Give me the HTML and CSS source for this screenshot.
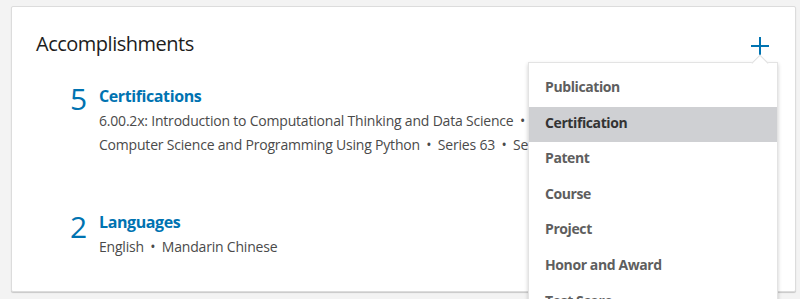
FILE: index.html
```html
<!DOCTYPE html>
<html lang="en">
<head>
<meta charset="utf-8">
<title>Accomplishments</title>
<link rel="stylesheet" href="styles.css">
</head>
<body>
	<div class="card">
		<div class="card_head">
			<h2 class="card_title">Accomplishments</h2>
			<button class="add_btn" type="button" aria-label="Add accomplishment">
				<svg width="18" height="18" viewBox="0 0 18 18"><path d="M9 0v18M0 9h18" stroke="#0073b1" stroke-width="2" fill="none"/></svg>
			</button>
		</div>

		<ul class="accomplishments">
			<li class="acc_item">
				<div class="acc_count">5</div>
				<div class="acc_body">
					<h3 class="acc_title">Certifications</h3>
					<div class="acc_line">6.00.2x: Introduction to Computational Thinking and Data Science <span class="dot">&bull;</span> 6.00.1x: Introduction to</div>
					<div class="acc_line">Computer Science and Programming Using Python <span class="dot">&bull;</span> Series 63 <span class="dot">&bull;</span> Series 65 <span class="dot">&bull;</span> Series 7</div>
				</div>
			</li>
			<li class="acc_item acc_item2">
				<div class="acc_count">2</div>
				<div class="acc_body">
					<h3 class="acc_title">Languages</h3>
					<div class="acc_line">English <span class="dot">&bull;</span> Mandarin Chinese</div>
				</div>
			</li>
		</ul>

		<!-- add menu, open -->
		<ul class="add_menu">
			<li>Publication</li>
			<li class="active">Certification</li>
			<li>Patent</li>
			<li>Course</li>
			<li>Project</li>
			<li>Honor and Award</li>
			<li>Test Score</li>
			<li>Language</li>
		</ul>
	</div>
</body>
</html>
```

FILE: styles.css
```css
html {
 background:#f3f3f3;
}
body {
 margin:0;
 padding:6px 0 0 11px;
 height:293px;
 overflow:hidden;
 font:normal 14px "Open Sans",Arial,sans-serif;
 color:#4a4a4a;
}

/* CARD */
.card {
	position: relative;
	width: 783px;
	height: 284px;
	background: #fff;
	border: 1px solid #dcdcdc;
	border-radius: 2px;
	box-shadow: 0 1px 1px rgba(0,0,0,0.18);
}
.card_head {
	display: flex;
	justify-content: space-between;
	align-items: center;
	padding: 23px 26px 0 24px;
}
.card_title {
	margin: 0;
	font-size: 20px;
	font-weight: normal;
	line-height: 28px;
	letter-spacing: -0.5px;
	color: #1d1d1d;
}
.add_btn {
	border: 0;
	background: none;
	padding: 0;
	margin-top: 4px;
	display: flex;
}

/* LIST */
.accomplishments {
	list-style: none;
	margin: 0;
	padding: 26px 0 0 58px;
}
.acc_item {
	display: flex;
	align-items: flex-start;
}
.acc_item2 {
	margin-top: 53px;
}
.acc_count {
	width: 29px;
	font-size: 30px;
	line-height: 30px;
	color: #0073b1;
}
.acc_item2 .acc_count {
	margin-top: 2px;
}
.acc_title {
	margin: 0 0 1px 0;
	font-size: 16px;
	font-weight: bold;
	line-height: 24px;
	letter-spacing: -0.4px;
	color: #0073b1;
}
.acc_line {
	line-height: 24px;
	letter-spacing: -0.2px;
	white-space: nowrap;
}
.acc_item2 .acc_line {
	margin-top: 1px;
}
.dot {
	margin: 0 3px;
}

/* MENU */
.add_menu {
	position: absolute;
	left: 516px;
	top: 55px;
	width: 248px;
	margin: 0;
	padding: 8px 0 0 0;
	list-style: none;
	background: #fff;
	border: 1px solid #e3e3e3;
	box-shadow: 0 2px 4px rgba(0,0,0,0.2);
}
.add_menu:before {
	content: "";
	position: absolute;
	top: -6px;
	left: 225px;
	width: 11px;
	height: 11px;
	background: #fff;
	border-left: 1px solid #e0e0e0;
	border-top: 1px solid #e0e0e0;
	transform: rotate(45deg);
}
.add_menu li {
	position: relative;
	height: 35.6px;
	line-height: 31px;
	padding-left: 16px;
	font-weight: bold;
	letter-spacing: -0.4px;
	color: #5e5e5e;
}
.add_menu li.active {
	background: #cfd0d3;
	color: #333;
}
```
